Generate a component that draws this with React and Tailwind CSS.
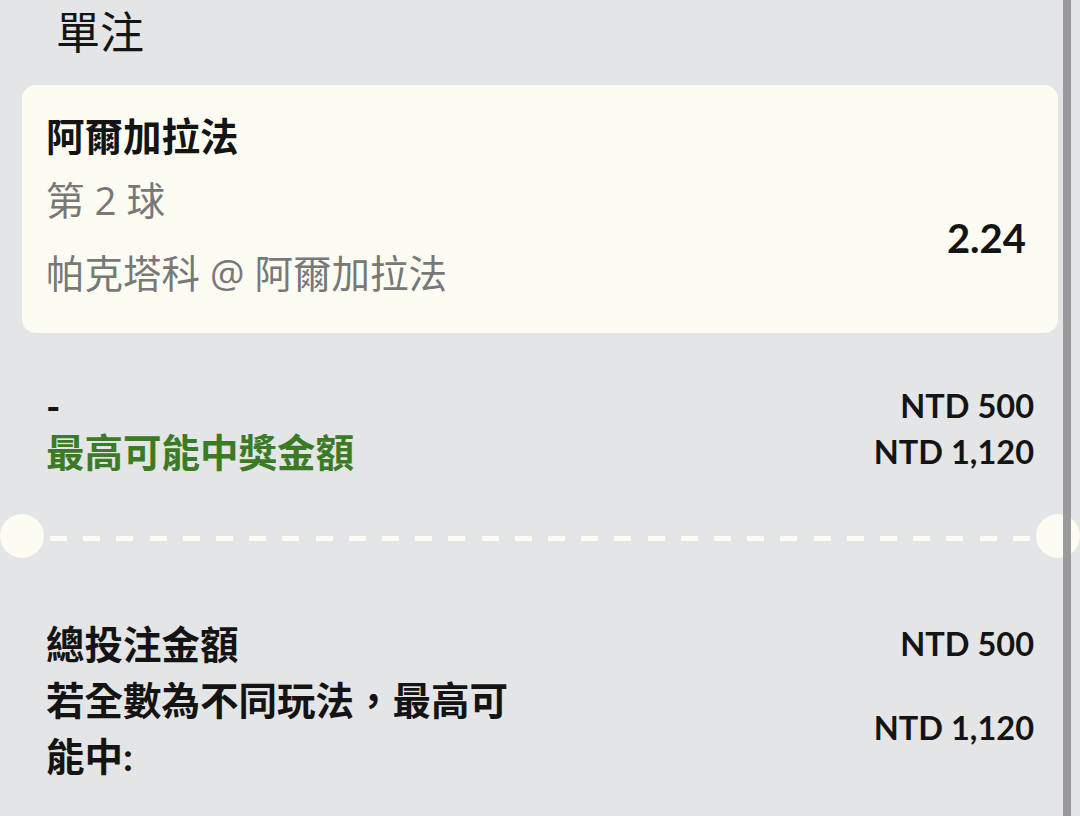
const font = "font-[family-name:Lato,'Noto_Sans_CJK_TC',sans-serif]";

function Dashes() {
  const items = Array.from({ length: 30 });
  return (
    <div className="flex flex-1 items-center justify-between px-[6px] pt-[4px]">
      {items.map((_, i) => (
        <span key={i} className="block h-[5px] w-[17px] bg-[#fdfcf2]" />
      ))}
    </div>
  );
}

export default function App() {
  return (
    <div className={`relative h-[816px] w-[1080px] overflow-hidden bg-[#e4e5e7] text-[#141414] ${font}`}>
      {/* Header */}
      <div className="pl-[56px] pt-[2px] text-[44px] leading-[60px] font-normal">單注</div>

      {/* Selection card */}
      <div className="mx-[22px] mt-[23px] flex rounded-[14px] bg-[#fdfcf3] pl-[24px] pr-[32px] pt-[25px] pb-[34px]">
        <div className="flex flex-1 flex-col text-[38.5px] leading-[52px]">
          <div className="font-bold">阿爾加拉法</div>
          <div className="mt-[12px] font-['Open_Sans','Noto_Sans_CJK_TC',sans-serif] text-[#787878]">第 2 球</div>
          <div className="mt-[21px] font-['Open_Sans','Noto_Sans_CJK_TC',sans-serif] text-[#787878]">帕克塔科 @ 阿爾加拉法</div>
        </div>
        <div className="mt-[102px] text-[40px] font-bold leading-[52px]">2.24</div>
      </div>

      {/* Stake rows */}
      <div className="mt-[50px] px-[46px] text-[38.5px]">
        <div className="flex h-[46px] items-center justify-between leading-[46px]">
          <span className="font-bold">-</span>
          <span className="text-[32.5px] font-bold">NTD 500</span>
        </div>
        <div className="flex h-[46px] items-center justify-between leading-[46px]">
          <span className="font-bold text-[#3b7b25]">最高可能中獎金額</span>
          <span className="text-[32.5px] font-bold">NTD 1,120</span>
        </div>
      </div>

      {/* Ticket perforation */}
      <div className="mt-[39px] flex h-[44px] items-center">
        <span className="block h-[44px] w-[44px] shrink-0 rounded-full bg-[#fdfcf2]" />
        <Dashes />
        <span className="block h-[44px] w-[44px] shrink-0 rounded-full bg-[#fdfcf2]" />
      </div>

      {/* Totals */}
      <div className="mt-[58px] px-[46px] text-[38.5px] font-bold">
        <div className="flex h-[56px] items-center justify-between leading-[56px]">
          <span>總投注金額</span>
          <span className="text-[32.5px]">NTD 500</span>
        </div>
        <div className="flex items-center justify-between leading-[56px]">
          <span className="w-[480px]">若全數為不同玩法，最高可能中:</span>
          <span className="text-[32.5px]">NTD 1,120</span>
        </div>
      </div>

      {/* Scrollbar overlay */}
      <div className="absolute top-0 bottom-0 left-[1063px] w-[8px] bg-[#9a9a9c]" />
    </div>
  );
}
